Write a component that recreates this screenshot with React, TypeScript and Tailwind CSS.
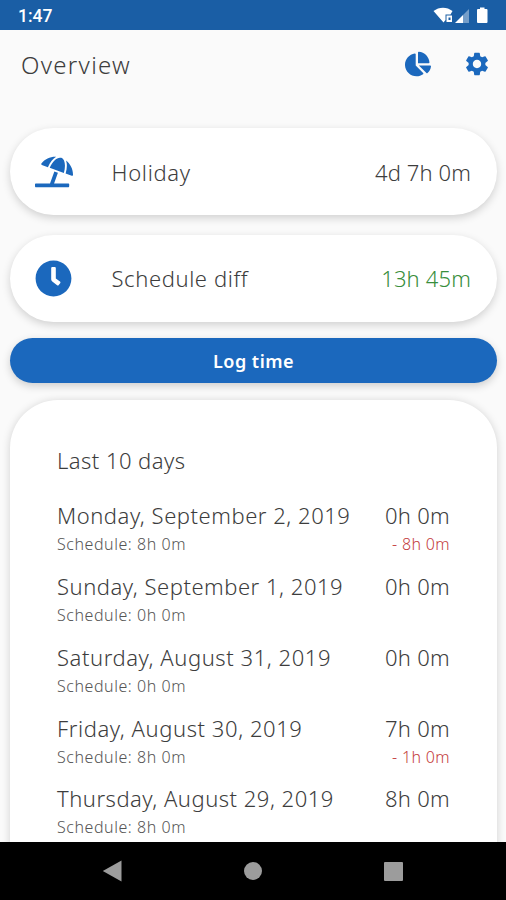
import { FaChartPie, FaClock, FaUmbrellaBeach } from "react-icons/fa";
import { MdSettings } from "react-icons/md";

const days = [
  { date: "Monday, September 2, 2019", tracking: "tracking-[0.53px]", schedule: "8h 0m", worked: "0h 0m", diff: "- 8h 0m" },
  { date: "Sunday, September 1, 2019", tracking: "tracking-[0.52px]", schedule: "0h 0m", worked: "0h 0m", diff: "" },
  { date: "Saturday, August 31, 2019", tracking: "tracking-[0.56px]", schedule: "0h 0m", worked: "0h 0m", diff: "" },
  { date: "Friday, August 30, 2019", tracking: "tracking-[0.57px]", schedule: "8h 0m", worked: "7h 0m", diff: "- 1h 0m" },
  { date: "Thursday, August 29, 2019", tracking: "tracking-[0.5px]", schedule: "8h 0m", worked: "8h 0m", diff: "" },
];

function StatusBar() {
  return (
    <div className="flex h-[30px] shrink-0 items-center justify-between bg-[#1a5ea5] pr-[16px] pl-[18px]">
      <span className="mt-px font-['Roboto',sans-serif] text-[17.5px] leading-[30px] font-medium text-white">1:47</span>
      <svg width="58" height="20" viewBox="0 0 58 20" fill="#fff">
        <path d="M1.500 6C7 1.500 15 1.500 20.500 6L18.500 9.500H13.500V15L11.500 17.500Z" />
        <path fillRule="evenodd" d="M14.500 10.500H20V17H14.500ZM16.500 12.500V15H18.500V12.500Z" />
        <path d="M23 18L31 10V18Z" />
        <path d="M31 10L37 4V18H31Z" opacity=".4" />
        <path d="M48 4V2.500H52.500V4H54.500Q55.500 4 55.500 5V17Q55.500 18 54.500 18H46Q45 18 45 17V5Q45 4 46 4Z" />
      </svg>
    </div>
  );
}

export default function App() {
  return (
    <div className="flex h-[900px] w-[506px] flex-col overflow-hidden bg-[#fafafa] font-['Noto_Sans','Open_Sans',sans-serif] font-light text-[#3d3d3d]">
      <StatusBar />
      <header className="flex h-[69px] shrink-0 items-center justify-between pr-[15px] pl-[21px] text-[#1b68bd]">
        <h1 className="text-2xl font-light tracking-[1.3px] text-[#3d3d3d]">Overview</h1>
        <div className="-mt-px flex items-center gap-[32px]">
          <FaChartPie className="size-[26px]" />
          <MdSettings className="size-[28px]" />
        </div>
      </header>

      <main className="flex min-h-0 flex-1 flex-col overflow-hidden pt-[29px] pr-[9px] pl-[10px]">
        <section className="flex h-[87px] shrink-0 items-center rounded-full bg-white pr-[26px] pl-[25px] shadow-[0_3px_8px_rgba(0,0,0,0.17)]">
          <FaUmbrellaBeach className="h-[36px] w-[38px] text-[#1b68bd]" />
          <span className="ml-[38.5px] text-[22px] leading-7 tracking-[0.7px]">Holiday</span>
          <span className="ml-auto text-[22px] leading-7 tracking-[0.1px]">4d 7h 0m</span>
        </section>
        <section className="mt-5 flex h-[87px] shrink-0 items-center rounded-full bg-white pr-[26px] pl-[25px] shadow-[0_3px_8px_rgba(0,0,0,0.17)]">
          <FaClock className="size-[37px] text-[#1b68bd]" />
          <span className="-mt-px ml-[39.5px] text-[22px] leading-7 tracking-[0.6px]">Schedule diff</span>
          <span className="-mt-px ml-auto text-[22px] leading-7 tracking-[0.15px] text-[#388e3c]">13h 45m</span>
        </section>
        <button className="mt-4 h-[45px] shrink-0 rounded-full bg-[#1b68bd] text-lg leading-none font-semibold tracking-[0.5px] text-white shadow-[0_3px_8px_rgba(0,0,0,0.18)]">
          Log time
        </button>
        <section className="mt-[17px] h-[520px] shrink-0 rounded-t-[48px] bg-white pt-[46px] pr-[47px] pl-[47px] shadow-[0_1px_8px_rgba(0,0,0,0.17)]">
          <h2 className="text-[22px] leading-7 font-light tracking-[0.45px]">Last 10 days</h2>
          <div className="mt-[27.4px] flex flex-col">
            {days.map((day) => (
              <div key={day.date} className="flex h-[70.75px] justify-between">
                <div>
                  <div className={`text-[22px] leading-7 whitespace-nowrap ${day.tracking}`}>{day.date}</div>
                  <div className="mt-[3px] text-base leading-6 tracking-[0.55px] text-[#555]">Schedule: {day.schedule}</div>
                </div>
                <div className="text-right">
                  <div className="text-[22px] leading-7 tracking-[0.3px]">{day.worked}</div>
                  <div className="mt-[3px] text-base leading-6 tracking-[0.35px] text-[#c43c3c]">{day.diff}</div>
                </div>
              </div>
            ))}
          </div>
        </section>
      </main>

      <nav className="flex h-[58px] shrink-0 items-center justify-between bg-black pr-[103px] pl-[102px]">
        <svg width="20" height="22" viewBox="0 0 20 22" fill="#9c9c9c"><path d="M.8 11L19.500.5V21.500Z" /></svg>
        <div className="size-[18px] rounded-full bg-[#9c9c9c]" />
        <div className="size-[19px] rounded-[1px] bg-[#9c9c9c]" />
      </nav>
    </div>
  );
}
